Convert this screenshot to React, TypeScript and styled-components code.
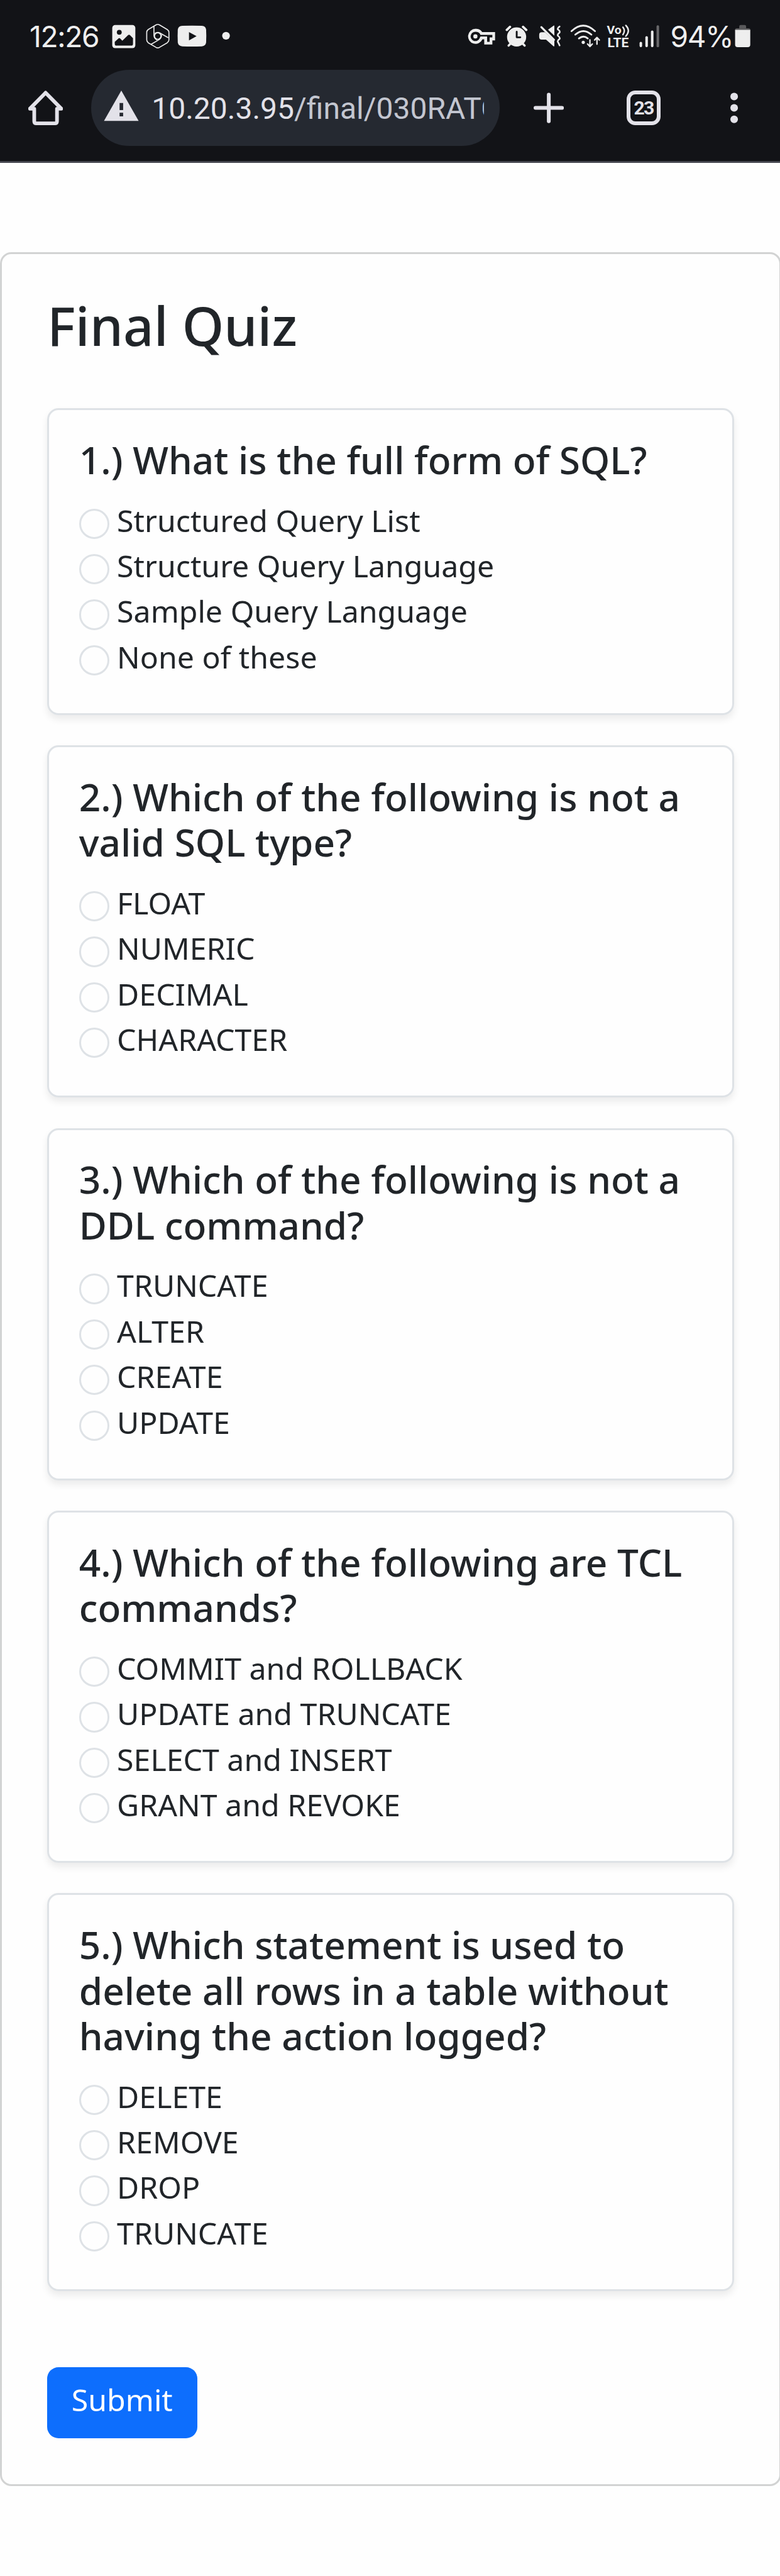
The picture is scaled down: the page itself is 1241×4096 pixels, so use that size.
import React from 'react';
import styled, { createGlobalStyle } from 'styled-components';

const SCALE = 4096 / 4753;
const px = (n: number) => `${+(n * SCALE).toFixed(3)}px`;

const ink = '#eeeeee';
const chromeInk = '#e3e2e9';
const barColor = '#121317';

const GlobalStyle = createGlobalStyle`
  *, *::before, *::after { box-sizing: border-box; }
  body {
    margin: 0;
    background: #fefefe;
    color: #212529;
    font-family: "Noto Sans", sans-serif;
  }
`;

const Screen = styled.div`
  width: 1241px;
  height: 4096px;
  overflow: hidden;
  background: #fefefe;
`;

/* ---------- system status bar ---------- */

const StatusBar = styled.div`
  display: flex;
  justify-content: space-between;
  height: ${px(100)};
  padding: ${px(30)} ${px(53)} 0 ${px(54.5)};
  background: ${barColor};
`;

const StatusGroup = styled.div`
  display: flex;
  height: ${px(70)};
`;

const StatusText = styled.span<{ $width: number; $track?: number }>`
  width: ${p => px(p.$width)};
  height: ${px(70)};
  line-height: ${px(75)};
  font-family: Inter, sans-serif;
  font-size: ${px(53.5)};
  letter-spacing: ${p => px(p.$track ?? 0)};
  white-space: nowrap;
  color: ${ink};
`;

const Glyph = styled.svg<{ $w: number; $h: number; $gap?: number }>`
  display: block;
  flex: none;
  width: ${p => px(p.$w)};
  height: ${p => px(p.$h)};
  margin-left: ${p => px(p.$gap ?? 0)};
`;

type StatusIconProps = { from: number; to: number; gap?: number; children: React.ReactNode };

/* Status icons share one 210-unit tall grid, three units to a pixel. */
const StatusIcon = ({ from, to, gap = 0, children }: StatusIconProps) => (
  <Glyph
    $w={(to - from) / 3}
    $h={70}
    $gap={gap / 3}
    viewBox={`${from} 0 ${to - from} 210`}
    fill={ink}
  >
    {children}
  </Glyph>
);

const Status = () => (
  <StatusBar>
    <StatusGroup>
      <StatusText $width={151.5} $track={-1.5}>12:26</StatusText>
      <StatusIcon from={500} to={632} gap={2}>
        <rect x="502" y="48" width="128" height="128" rx="16" />
        <circle cx="541" cy="88" r="13.5" fill={barColor} />
        <path d="M516 141 536 123q5-5 10 0l12 12 32-31q5-4 10 0l17 17v31q0 10-10 10h-81q-10 0-10-10z" fill={barColor} />
      </StatusIcon>
      <StatusIcon from={688} to={822} gap={56}>
        <g fill="none" stroke={ink} strokeWidth="5.8" strokeLinejoin="round">
          <path d="M745 47q9-5 18 0l44 26q9 6 9 16v41q0 10-9 16l-44 26q-9 5-18 0l-44-26q-8-6-8-16V89q0-10 8-16z" />
          <path d="M733 54v51q1 17 17 26" />
          <path d="M733 54v51q1 17 17 26" transform="rotate(120 754 109)" />
          <path d="M733 54v51q1 17 17 26" transform="rotate(240 754 109)" />
          <circle cx="754" cy="109" r="18" />
        </g>
      </StatusIcon>
      <StatusIcon from={862} to={1025} gap={40}>
        <path d="M890 52q54-2 108 0q22 1 24 22q2 35 0 70q-2 21-24 22q-54 2-108 0q-23-1-25-22q-2-35 0-70q2-21 25-22z" />
        <path d="M927 87v46l42-23z" fill={barColor} />
      </StatusIcon>
      <StatusIcon from={1108} to={1154} gap={83}>
        <circle cx="1131" cy="107.500" r="21.500" />
      </StatusIcon>
    </StatusGroup>

    <StatusGroup>
      <StatusIcon from={40} to={194}>
        <path fillRule="evenodd" d="M83 69a41.500 41.500 0 0 1 38 18h71v46h-15v23h-45v-29h-10a41.500 41.500 0 1 1-39-58zm0 16a26 26 0 1 0 24 35l4-9h37v30h14v-24h15v-14h-66q-5-18-28-18z" />
        <circle cx="83" cy="111" r="11.500" />
      </StatusIcon>
      <StatusIcon from={248} to={372} gap={54}>
        <circle cx="310.500" cy="114" r="53" />
        <path d="M256 75l18-17M364 75l-18-17" stroke={ink} strokeWidth="13" strokeLinecap="round" />
        <path d="M266 162l14-14M355 162l-14-14" stroke={ink} strokeWidth="12" strokeLinecap="round" />
        <path d="M311 85v31h20" fill="none" stroke={barColor} strokeWidth="10" strokeLinecap="round" strokeLinejoin="round" />
      </StatusIcon>
      <StatusIcon from={432} to={558} gap={60}>
        <path d="M484 74 515 51q4-2 4 3v53z" />
        <path d="M455 53l70 70" stroke={barColor} strokeWidth="8" />
        <path d="M449 88h18l52 49v26q0 5-5 2l-41-36h-24q-14 0-14-14v-13q0-14 14-14z" />
        <path d="M447 60l70 70" stroke={ink} strokeWidth="11" strokeLinecap="round" />
        <path d="M548 56q-14 9-9 17q13 8 9 17q-14 9-9 18q13 8 9 17q-14 9-9 18q4 6 9 18" fill="none" stroke={ink} strokeWidth="9" strokeLinecap="round" strokeLinejoin="round" />
      </StatusIcon>
      <StatusIcon from={608} to={780} gap={50}>
        <g fill="none" stroke={ink} strokeLinecap="round">
          <path d="M616 82q65-61 130 0" strokeWidth="10" />
          <path d="M637 101q45-39 89 0" strokeWidth="10" />
          <path d="M657 122q25-20 49 0" strokeWidth="10" />
          <path d="M718 130v36M705 153l13 14 13-14M757 154v-36M744 131l13-14 13 14" strokeWidth="8" strokeLinejoin="round" />
        </g>
        <circle cx="681" cy="144" r="9" />
      </StatusIcon>
      <StatusIcon from={60} to={190} gap={30}>
        <g fontFamily="Roboto, sans-serif" fontWeight="700">
          <text x="62" y="99" fontSize="65" textLength="81" lengthAdjust="spacingAndGlyphs">Vo</text>
          <text x="65" y="171" fontSize="70" textLength="118" lengthAdjust="spacingAndGlyphs">LTE</text>
        </g>
        <path d="M151 60q15 20 0 41M167 50q28 29 0 60" fill="none" stroke={ink} strokeWidth="8" strokeLinecap="round" />
      </StatusIcon>
      <StatusIcon from={238} to={350} gap={48}>
        <rect x="240" y="141" width="14" height="30" rx="7" />
        <rect x="272" y="110" width="14" height="61" rx="7" />
        <rect x="303" y="78" width="14" height="93" rx="7" />
        <rect x="334" y="50" width="14" height="121" rx="6" fill="#69696b" />
      </StatusIcon>
      <StatusIcon from={350} to={412}>{null}</StatusIcon>
      <StatusText $width={119.500} $track={-1.500}>94%</StatusText>
      <StatusIcon from={772} to={862}>
        <path d="M774 80v-6q0-8 10-8h13V56q0-8 8-8h22q8 0 8 8v10h13q10 0 10 8v6z" fill="#58585a" />
        <path d="M774 75h84v82q0 14-14 14h-56q-14 0-14-14z" />
      </StatusIcon>
    </StatusGroup>
  </StatusBar>
);

/* ---------- browser toolbar ---------- */

const Toolbar = styled.div`
  display: flex;
  align-items: center;
  height: ${px(201)};
  padding: ${px(1)} ${px(52)} 0;
  border-bottom: ${px(4.2)} solid #45464f;
  background: ${barColor};
`;

const AddressBar = styled.div`
  display: flex;
  align-items: center;
  width: ${px(754)};
  height: ${px(140)};
  margin-left: ${px(52)};
  padding: 0 ${px(28)} 0 ${px(23)};
  border-radius: ${px(70)};
  background: #252931;
`;

const Url = styled.div`
  flex: 1;
  margin-left: ${px(24)};
  padding-top: ${px(3)};
  overflow: hidden;
  white-space: nowrap;
  font-family: Roboto, sans-serif;
  font-size: ${px(55.7)};
  line-height: ${px(72)};
  color: #c3c6d0;
`;

const Host = styled.span`
  color: ${chromeInk};
`;

const Tabs = styled.div`
  display: flex;
  align-items: center;
  justify-content: center;
  width: ${px(63)};
  height: ${px(64)};
  margin-left: ${px(116)};
  border: ${px(7.2)} solid ${chromeInk};
  border-radius: ${px(16)};
  font-family: Roboto, sans-serif;
  font-size: ${px(35)};
  font-weight: 700;
  letter-spacing: ${px(-2)};
  line-height: 1;
  color: ${chromeInk};
`;

const Browser = () => (
  <Toolbar>
    <Glyph $w={64} $h={64} viewBox="52 167 64 64" fill="none" stroke={chromeInk} strokeWidth="6.8">
      <path d="M84 171 55 200.500H63V223.500q0 4 4 4h34q4 0 4-4v-23h8z" strokeLinejoin="round" />
    </Glyph>
    <AddressBar>
      <Glyph $w={65} $h={64} viewBox="191 167 65 64" fill={chromeInk}>
        <path fillRule="evenodd" d="M223.500 167 255.500 223h-64zM220.300 190v13h6.600v-13zm0 18v6.500h6.600V208z" />
      </Glyph>
      <Url>
        <Host>10.20.3.95</Host>/final/030RATC
      </Url>
    </AddressBar>
    <Glyph $w={56} $h={64} $gap={63} viewBox="985 167 56 64" stroke={chromeInk} strokeWidth="7" strokeLinecap="round">
      <path d="M988.500 199h49M1013 174.500v49" />
    </Glyph>
    <Tabs>23</Tabs>
    <Glyph $w={14} $h={64} $gap={129} viewBox="1349 167 14 64" fill={chromeInk}>
      <circle cx="1356" cy="178" r="7" />
      <circle cx="1356" cy="199" r="7" />
      <circle cx="1356" cy="220" r="7" />
    </Glyph>
  </Toolbar>
);

/* ---------- quiz ---------- */

const QuizCard = styled.main`
  width: ${px(1442)};
  height: ${px(4122)};
  margin-top: ${px(164)};
  padding: ${px(74)} ${px(83.5)} ${px(84)};
  border: 3px solid #d2d3d3;
  border-radius: ${px(21)};
`;

const Title = styled.h1`
  margin: 0 0 ${px(93)};
  font-size: ${px(98.6)};
  font-weight: 500;
  line-height: ${px(118)};
`;

const QuestionList = styled.div`
  display: flex;
  flex-direction: column;
  gap: ${px(56)};
`;

const QuestionCard = styled.section<{ $lines: number }>`
  height: ${p => px(482 + 84 * p.$lines)};
  padding: ${px(49.5)} ${px(55.5)} 0;
  border: 3px solid #dee2e6;
  border-radius: ${px(21)};
  box-shadow: 0 ${px(7)} ${px(14)} rgba(0, 0, 0, 0.075);
`;

const Question = styled.h5`
  margin: 0 0 ${px(34)};
  font-size: ${px(70)};
  font-weight: 500;
  line-height: ${px(84)};
`;

const Option = styled.label`
  display: flex;
  align-items: flex-start;
  height: ${px(84)};
  font-size: ${px(56)};
  line-height: ${px(71.8)};
`;

const Radio = styled.input.attrs({ type: 'radio' })`
  appearance: none;
  flex: none;
  width: ${px(56)};
  height: ${px(56)};
  margin: ${px(14)} ${px(14)} 0 0;
  border: 3px solid #dee2e6;
  border-radius: 50%;
  background: #fefefe;
`;

const Submit = styled.button`
  display: block;
  width: ${px(277)};
  height: ${px(132)};
  margin-top: ${px(140)};
  padding: 0 0 ${px(12)};
  border: 0;
  border-radius: ${px(21)};
  background: #0d6efd;
  color: #fff;
  font-family: inherit;
  font-size: ${px(56)};
`;

const questions = [
  { text: '1.) What is the full form of SQL?', lines: 1, options: ['Structured Query List', 'Structure Query Language', 'Sample Query Language', 'None of these'] },
  { text: '2.) Which of the following is not a valid SQL type?', lines: 2, options: ['FLOAT', 'NUMERIC', 'DECIMAL', 'CHARACTER'] },
  { text: '3.) Which of the following is not a DDL command?', lines: 2, options: ['TRUNCATE', 'ALTER', 'CREATE', 'UPDATE'] },
  { text: '4.) Which of the following are TCL commands?', lines: 2, options: ['COMMIT and ROLLBACK', 'UPDATE and TRUNCATE', 'SELECT and INSERT', 'GRANT and REVOKE'] },
  { text: '5.) Which statement is used to delete all rows in a table without having the action logged?', lines: 3, options: ['DELETE', 'REMOVE', 'DROP', 'TRUNCATE'] },
];

export default function App() {
  return (
    <Screen>
      <GlobalStyle />
      <Status />
      <Browser />
      <QuizCard>
        <Title>Final Quiz</Title>
        <QuestionList>
          {questions.map((q, i) => (
            <QuestionCard key={q.text} $lines={q.lines}>
              <Question>{q.text}</Question>
              {q.options.map(option => (
                <Option key={option}>
                  <Radio name={`q${i}`} />
                  {option}
                </Option>
              ))}
            </QuestionCard>
          ))}
        </QuestionList>
        <Submit>Submit</Submit>
      </QuizCard>
    </Screen>
  );
}
